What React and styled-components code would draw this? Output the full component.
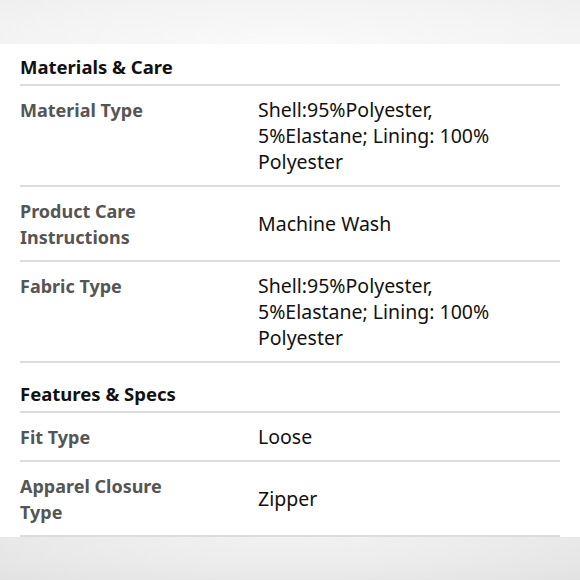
import React from 'react'
import styled, { createGlobalStyle } from 'styled-components'

const Global = createGlobalStyle`
    html, body {
        margin: 0;
        padding: 0;
        background: #ececec;
    }
    body {
        font-family: "Noto Sans", "Open Sans", sans-serif;
    }
`

const Page = styled.div`
    display: flex;
    flex-direction: column;
    height: 580px;
    width: 580px;
    overflow: hidden;
`

const TopShade = styled.div`
    height: 44px;
    flex-shrink: 0;
    background: radial-gradient(ellipse at 50% 100%, #fafafa 0%, #f4f4f4 60%, #efefef 100%);
`

const BottomShade = styled.div`
    flex: 1;
    background: radial-gradient(ellipse at 50% 0%, #f2f2f2 0%, #e9e9e9 65%, #e2e2e2 100%);
`

const Panel = styled.div`
    background: #fff;
    padding: 10px 20px 0;
`

const Heading = styled.h2`
    margin: ${p => (p.first ? '0' : '18px')} 0 0;
    padding: 0 0 4px;
    font-size: 18.5px;
    line-height: 26px;
    font-weight: 700;
    color: #111;
    border-bottom: 2px solid #dcdcdc;
`

const Row = styled.div`
    display: grid;
    grid-template-columns: 238px 1fr;
    align-items: center;
    padding: 11px 0 10px;
    border-bottom: 2px solid #dcdcdc;
`

const Label = styled.div`
    align-self: start;
    font-size: 18px;
    line-height: 26px;
    font-weight: 700;
    color: #555;
    padding-right: 60px;
`

const Value = styled.div`
    font-size: 19.5px;
    line-height: 26px;
    color: #111;
    padding-right: 40px;
`

const sections = [
    {
        title: 'Materials & Care',
        rows: [
            ['Material Type', 'Shell:95%Polyester, 5%Elastane; Lining: 100% Polyester'],
            ['Product Care Instructions', 'Machine Wash'],
            ['Fabric Type', 'Shell:95%Polyester, 5%Elastane; Lining: 100% Polyester'],
        ],
    },
    {
        title: 'Features & Specs',
        rows: [
            ['Fit Type', 'Loose'],
            ['Apparel Closure Type', 'Zipper'],
        ],
    },
]

function App() {
    return (
        <Page>
            <Global />
            <TopShade />
            <Panel>
                {sections.map((section, i) => (
                    <div key={section.title}>
                        <Heading first={i === 0}>{section.title}</Heading>
                        {section.rows.map(([label, value]) => (
                            <Row key={label}>
                                <Label>{label}</Label>
                                <Value>{value}</Value>
                            </Row>
                        ))}
                    </div>
                ))}
            </Panel>
            <BottomShade />
        </Page>
    )
}

export default App
